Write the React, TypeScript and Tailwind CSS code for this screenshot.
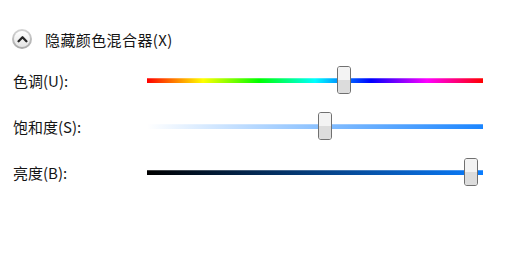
import type { CSSProperties } from "react";

const font: CSSProperties = {
  fontFamily: '"Noto Sans CJK SC", "Noto Sans", sans-serif',
};

const sliders = [
  {
    label: "色调(U):",
    thumb: 190,
    track:
      "bg-[linear-gradient(to_right,#ff0000,#ffff00,#00ff00,#00ffff,#0000ff,#ff00ff,#ff0000)]",
  },
  {
    label: "饱和度(S):",
    thumb: 171,
    track: "bg-[linear-gradient(to_right,#ffffff,#1a85ff)]",
  },
  {
    label: "亮度(B):",
    thumb: 317,
    track: "bg-[linear-gradient(to_right,#000000,#0a7dff)]",
  },
];

const ExpandButton = () => (
  <div className="flex h-[20px] w-[20px] items-center justify-center rounded-full bg-[linear-gradient(to_bottom,#d4d4d4,#a8a8a8)] p-[2px]">
    <div className="flex h-full w-full items-center justify-center rounded-full bg-[linear-gradient(to_bottom,#ffffff,#e4e4e4)]">
      <svg width="11" height="8" viewBox="0 0 11 8">
        <path
          d="M1.6 6.2 L5.5 2.3 L9.4 6.2"
          fill="none"
          stroke="#262626"
          strokeWidth="2.3"
          strokeLinecap="round"
          strokeLinejoin="round"
        />
      </svg>
    </div>
  </div>
);

const Slider = ({ thumb, track }: { thumb: number; track: string }) => (
  <div className="relative h-[28px] w-[336px]">
    <div className={`absolute left-0 right-0 top-[12px] h-[5px] ${track}`}>
      <div className="h-[1px] w-full bg-white/25" />
    </div>
    <div
      className="absolute top-0 flex h-[28px] w-[14px] flex-col overflow-hidden rounded-[3px] border border-[#707070] shadow-[inset_0_0_0_1px_#ffffff]"
      style={{ left: thumb }}
    >
      <div className="h-1/2 bg-[#f3f3f3]" />
      <div className="h-1/2 bg-[#dcdcdc]" />
    </div>
  </div>
);

export default function App() {
  return (
    <div
      className="h-[260px] w-[505px] bg-white px-[12px] pt-[29px] text-[15px] text-[#151515]"
      style={font}
    >
      <div className="flex h-[20px] items-center gap-[13px]">
        <ExpandButton />
        <span className="leading-none tracking-[0.4px]">隐藏颜色混合器(X)</span>
      </div>
      <div className="mt-[17px] flex flex-col gap-[18px]">
        {sliders.map((s) => (
          <div key={s.label} className="flex items-center">
            <span className="w-[135px] pl-[1px] leading-none">{s.label}</span>
            <Slider thumb={s.thumb} track={s.track} />
          </div>
        ))}
      </div>
    </div>
  );
}
